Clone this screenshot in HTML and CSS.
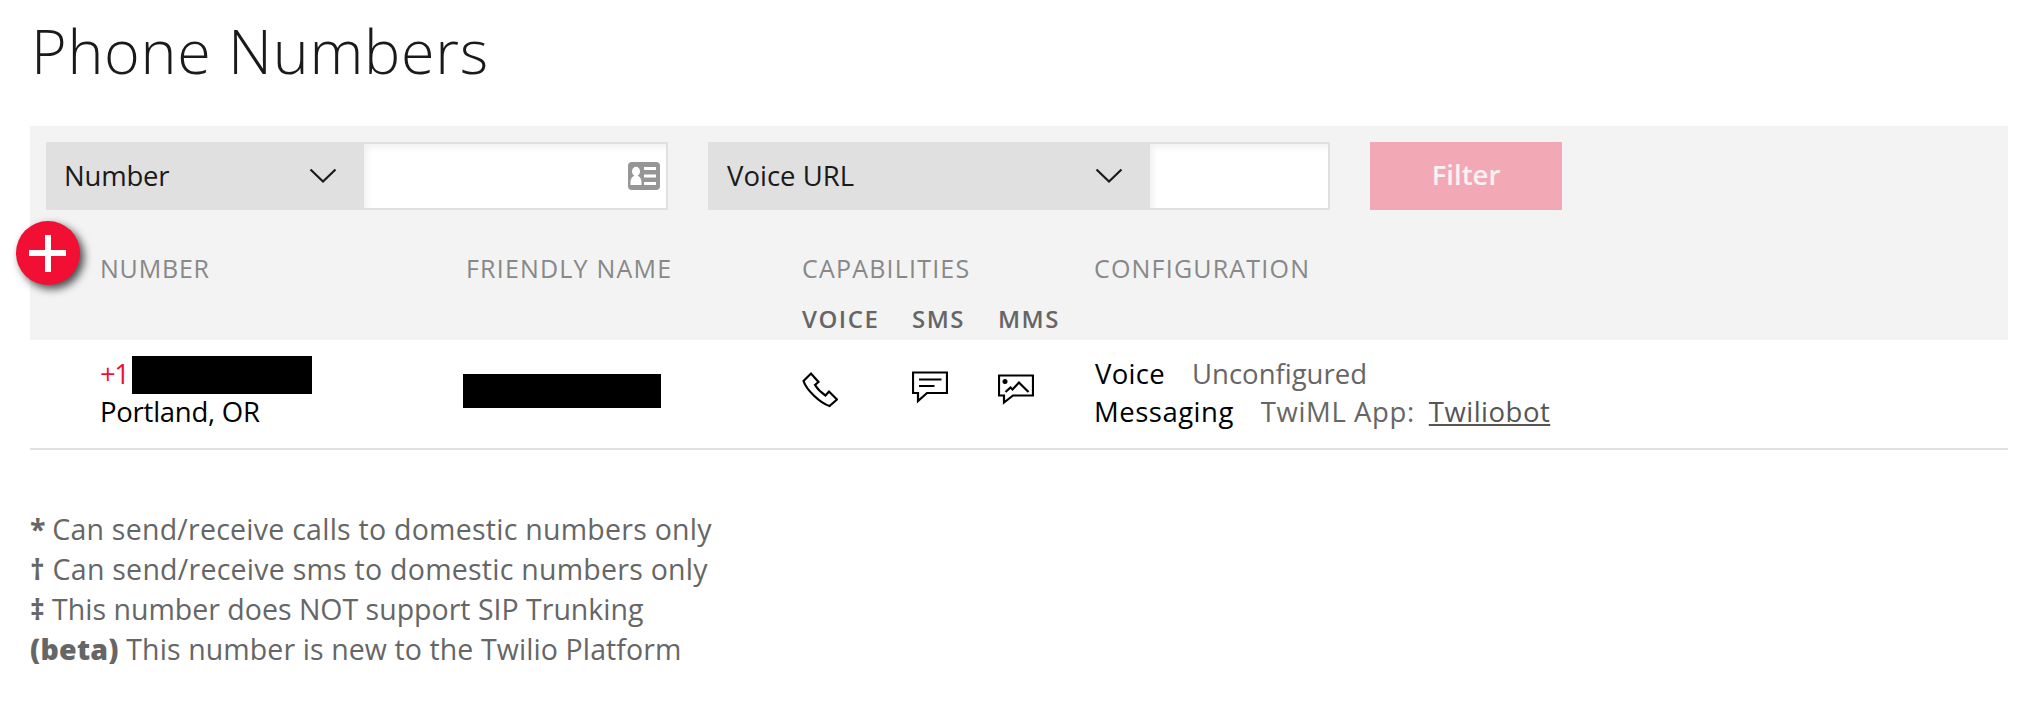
FILE: index.html
```
<!DOCTYPE html>
<html lang="en">
<head>
<meta charset="utf-8">
<title>Phone Numbers</title>
<link rel="stylesheet" href="styles.css">
</head>
<body>
<h1 class="title">Phone Numbers</h1>
<main class="content">
  <section class="panel">
    <button class="add" aria-label="Add number"></button>
    <form class="filters">
      <div class="group">
        <div class="select select-number"><span class="t-number">Number</span>
          <svg class="chevron" viewBox="0 0 28 16"><path d="M1.5 1.5 14 13.5 26.5 1.5"/></svg></div>
        <div class="input input-number">
          <svg class="card" viewBox="0 0 32 28"><rect width="32" height="28" rx="4" fill="#969696"/><ellipse cx="8" cy="9.5" rx="4" ry="4.7" fill="#fff"/><path d="M2.5 23v-3c0-3.5 2-5.5 4-6.5h3c2 1 4 3 4 6.5v3z" fill="#fff"/><path d="M16 6.5h12M16 14h12M16 21.5h12" stroke="#fff" stroke-width="3"/></svg>
        </div>
      </div>
      <div class="group">
        <div class="select select-url"><span>Voice URL</span>
          <svg class="chevron" viewBox="0 0 28 16"><path d="M1.5 1.5 14 13.5 26.5 1.5"/></svg></div>
        <div class="input input-url"></div>
      </div>
      <button class="filter" type="button">Filter</button>
    </form>
    <div class="columns heads">
      <span class="h-number">NUMBER</span><span>FRIENDLY NAME</span><span>CAPABILITIES</span><span>CONFIGURATION</span>
    </div>
    <div class="columns subheads">
      <div class="caps"><span>VOICE</span><span>SMS</span><span>MMS</span></div>
    </div>
  </section>
  <section class="columns row">
    <div class="cell">
      <div class="line"><a class="phone">+1</a><span class="redacted redacted-phone"></span></div>
      <div class="line city">Portland, OR</div>
    </div>
    <div class="cell"><span class="redacted redacted-name"></span></div>
    <div class="caps icons">
      <svg class="icon" viewBox="0 0 36 38"><path d="M1.5 10 9 2.5 16.5 11 13 14C15.500 18 19 21.500 23.500 24.500L27 20.500 35 28.500 27.500 35C18 32 4.500 19 1.500 10Z"/></svg>
      <svg class="icon" viewBox="0 0 36 38"><path d="M1 1.500H35V22H15L6 30V22H1ZM7 8.500H29.500M7 15H22.500"/></svg>
      <svg class="icon" viewBox="0 0 36 38"><path d="M1 4.500H35V24.500H15L6 31.500V24.500H1ZM7.500 21 12.500 16.500 14.500 18.500 21 11.500 30.500 21"/><circle cx="7" cy="10.500" r="2.500"/></svg>
    </div>
    <div class="cell">
      <div class="line"><span class="c-voice">Voice</span><span class="c-unconf">Unconfigured</span></div>
      <div class="line"><span class="c-msg">Messaging</span><span class="c-app">TwiML App:</span><a class="c-bot">Twiliobot</a></div>
    </div>
  </section>
  <footer class="notes">
    <p><b class="star">*</b> Can send/receive calls to domestic numbers only</p>
    <p><b>†</b> Can send/receive sms to domestic numbers only</p>
    <p class="trunking"><b>‡</b> This number does NOT support SIP Trunking</p>
    <p class="platform"><b class="beta">(beta)</b> This number is new to the Twilio Platform</p>
  </footer>
</main>
</body>
</html>
```
FILE: styles.css
```
* { box-sizing: border-box; }
body { margin: 0; background: #fff; color: #000; font: 27.5px/38px "Open Sans", "Noto Sans", sans-serif; }
.title { margin: 0; height: 126px; padding: 9px 0 0 31px; font-size: 61px; line-height: 84px; font-weight: 300; letter-spacing: .7px; color: #1a1a1a; }
.content { margin: 0 32px 0 30px; }
.panel { position: relative; height: 214px; padding: 16px 16px 0; background: #f3f3f3; }
.add { position: absolute; left: -14.5px; top: 95px; width: 64px; height: 64px; border: 0; border-radius: 50%; background: linear-gradient(#fff, #fff) center / 37px 6px no-repeat, linear-gradient(#fff, #fff) center / 6px 37px no-repeat, #f10f33; box-shadow: 4px 4px 8px rgba(0, 0, 0, .7); }
.filters { display: flex; gap: 40px; height: 68px; color: #1a1a1a; }
.group { display: flex; }
.select { display: flex; align-items: center; justify-content: space-between; padding: 0 27px 0 18px; background: #e0e0e0; }
.select-number { width: 318px; }
.select-url { width: 442px; padding-left: 19px; }
.t-number { letter-spacing: -.2px; }
.chevron { width: 28px; height: 16px; fill: none; stroke: #1a1a1a; stroke-width: 2.2; }
.input { display: flex; align-items: center; justify-content: flex-end; padding-right: 6px; border: 2px solid #e0e0e0; border-left: 0; background: #fff; box-shadow: inset 4px 4px 6px -1px #f0f0f0; }
.input-number { width: 304px; }
.input-url { width: 180px; }
.card { width: 32px; height: 28px; }
.filter { width: 192px; padding: 0 0 2px; border: 0; background: #f2a9b5; color: #f8f2f3; font: 600 27.5px/38px "Open Sans", sans-serif; }
.columns { display: grid; grid-template-columns: 366px 336px 292px 1fr; }
.heads { padding: 39px 0 0 54px; font-size: 25px; color: #888; letter-spacing: 1.2px; }
.h-number { letter-spacing: .8px; }
.subheads { padding: 13px 0 0 54px; font-size: 24px; font-weight: 600; color: #666; letter-spacing: 1.5px; }
.subheads .caps { grid-column: 3; }
.caps { display: grid; grid-template-columns: 110px 86px auto; justify-content: start; }
.row { height: 110px; padding: 15px 0 0 70px; border-bottom: 2px solid #e0e0e0; }
.line { display: flex; height: 38px; }
.phone { width: 32px; color: #f10f33; letter-spacing: -1.5px; }
.city { letter-spacing: -.25px; }
.redacted { display: block; background: #000; }
.redacted-phone { width: 180px; height: 38px; margin-top: 1px; }
.redacted-name { width: 198px; height: 34px; margin: 19px 0 0 -3px; }
.icons { padding-top: 16px; }
.icon { width: 36px; height: 38px; fill: none; stroke: #000; stroke-width: 2.2; }
.icon circle { fill: #000; stroke: none; }
.c-voice { margin-left: 1px; letter-spacing: .3px; }
.c-msg { letter-spacing: .5px; }
.c-unconf, .c-app { margin-left: 27px; color: #666; }
.c-app { letter-spacing: .6px; }
.c-bot { margin-left: 14px; color: #555; letter-spacing: .5px; text-decoration: underline; }
.notes { padding-top: 59px; color: #666; font-size: 28.5px; line-height: 40px; letter-spacing: .25px; }
.notes p { margin: 0; }
.star { letter-spacing: -1px; }
.notes .trunking { letter-spacing: 0; }
.notes .platform { letter-spacing: .1px; }
.beta { font-weight: 800; letter-spacing: .25px; }
```
